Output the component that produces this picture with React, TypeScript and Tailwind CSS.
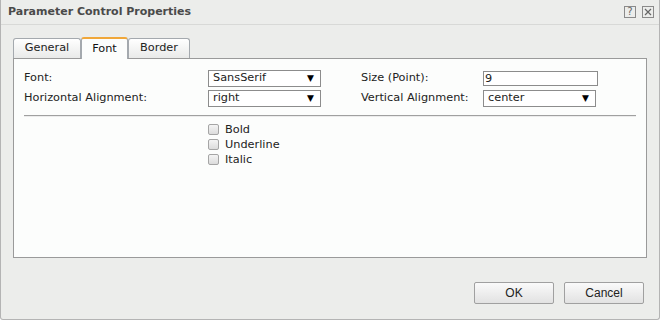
const font = { fontFamily: '"DejaVu Sans", Verdana, sans-serif' };

function Select({ value, width }: { value: string; width: string }) {
    return (
        <div
            className={`flex items-center justify-between h-[17px] border border-[#8c8c8c] bg-white pl-[4px] pr-[6px] ${width}`}
        >
            <span className="text-[11.3px] text-[#222] leading-none">{value}</span>
            <span className="text-[9px] text-black leading-none">▼</span>
        </div>
    );
}

function Check({ label }: { label: string }) {
    return (
        <div className="flex items-center h-[15px] gap-[6px]">
            <div className="w-[11px] h-[11px] rounded-[2px] border border-[#a5a5a5] bg-gradient-to-b from-[#f4f4f4] to-[#dcdcdc]" />
            <span className="text-[11.3px] text-[#222] leading-none">{label}</span>
        </div>
    );
}

export default function App() {
    return (
        <div
            className="w-[660px] h-[320px] bg-[#ecedeb] border border-t-0 border-[#b4b4b4] rounded-b-[3px] flex flex-col"
            style={font}
        >
            <div className="h-[25px] flex items-center justify-between pl-[7px] pr-[5px] border-b border-[#d8d9d7]">
                <span className="text-[11px] font-bold text-[#4a4a4a]">
                    Parameter Control Properties
                </span>
                <div className="flex gap-[6px]">
                    <div className="w-[12px] h-[12px] border border-[#8a8a8a] flex items-center justify-center text-[10px] text-[#666] leading-none">
                        ?
                    </div>
                    <div className="w-[12px] h-[12px] border border-[#8a8a8a] flex items-center justify-center">
                        <svg width="8" height="8" viewBox="0 0 8 8">
                            <path d="M1 1L7 7M7 1L1 7" stroke="#666" strokeWidth="1.2" />
                        </svg>
                    </div>
                </div>
            </div>

            <div className="pl-[12px] pr-[12px] pt-[11px]">
                <div className="flex items-end h-[22px]">
                    <div className="h-[20px] w-[68px] flex items-center justify-center border border-b-0 border-[#a4a9ae] rounded-t-[3px] bg-gradient-to-b from-white to-[#e9eae9] text-[11.3px] text-[#222]">
                        General
                    </div>
                    <div className="h-[22px] w-[47px] flex items-center justify-center border-x border-[#a4a9ae] border-t-2 border-t-[#f0a73a] rounded-t-[3px] bg-[#fcfdfc] text-[11.3px] text-[#111] mb-[-1px] relative z-10">
                        Font
                    </div>
                    <div className="h-[20px] w-[62px] flex items-center justify-center border border-b-0 border-[#a4a9ae] rounded-t-[3px] bg-gradient-to-b from-white to-[#e9eae9] text-[11.3px] text-[#222]">
                        Border
                    </div>
                </div>
                <div className="h-[200px] border border-[#9a9a9a] bg-[#fcfdfc] px-[10px] pt-[10px]">
                    <div className="flex flex-col gap-[2px]">
                        <div className="flex items-center h-[18px]">
                            <span className="w-[184px] text-[11.3px] text-[#222]">Font:</span>
                            <Select value="SansSerif" width="w-[113px]" />
                            <span className="ml-[40px] w-[122px] text-[11.3px] text-[#222]">Size (Point):</span>
                            <div className="w-[115px] h-[15px] border border-[#8c8c8c] bg-white pl-[1px] text-[11.3px] leading-[13px] text-[#222]">
                                9
                            </div>
                        </div>
                        <div className="flex items-center h-[18px]">
                            <span className="w-[184px] text-[11.3px] text-[#222]">Horizontal Alignment:</span>
                            <Select value="right" width="w-[113px]" />
                            <span className="ml-[40px] w-[122px] text-[11.3px] text-[#222]">Vertical Alignment:</span>
                            <Select value="center" width="w-[113px]" />
                        </div>
                    </div>
                    <div className="mt-[8px] border-t border-[#a0a0a0] border-b border-b-[#ececec] h-[2px]" />
                    <div className="pl-[184px] pt-[5px] flex flex-col">
                        <Check label="Bold" />
                        <Check label="Underline" />
                        <Check label="Italic" />
                    </div>
                </div>
            </div>

            <div className="flex justify-end gap-[10px] pr-[15px] mt-[24px]">
                {["OK", "Cancel"].map((b) => (
                    <div
                        key={b}
                        className="w-[80px] h-[22px] border border-[#a0a0a0] rounded-[2px] bg-gradient-to-b from-[#fafafa] to-[#e2e2e2] flex items-center justify-center text-[12px] text-[#222]"
                        style={{ fontFamily: '"Liberation Sans", Tahoma, sans-serif' }}
                    >
                        {b}
                    </div>
                ))}
            </div>
        </div>
    );
}
